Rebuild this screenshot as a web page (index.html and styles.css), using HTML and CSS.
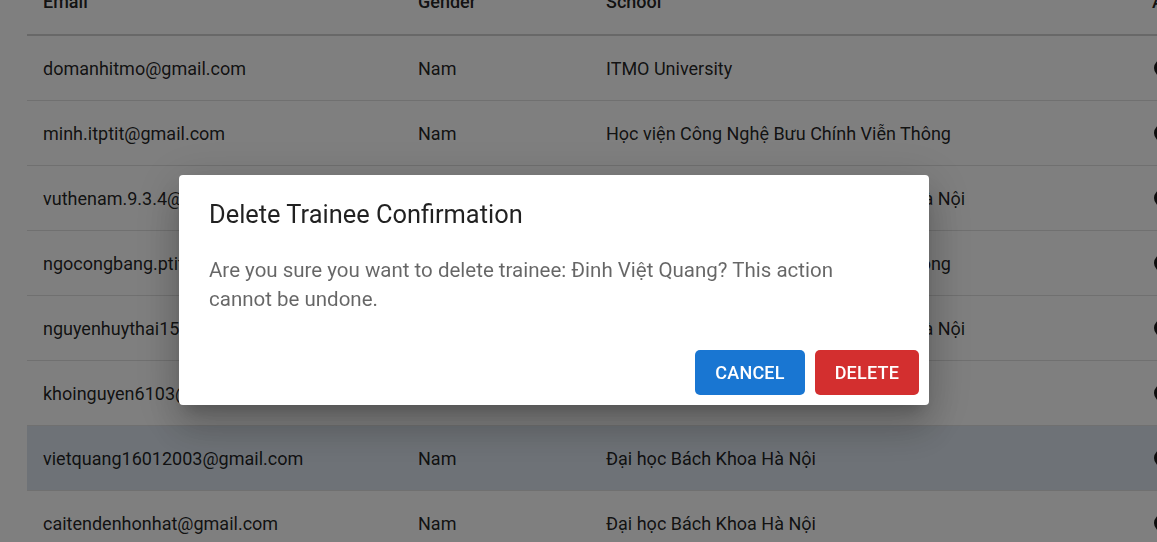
FILE: index.html
```html
<!DOCTYPE html>
<html lang="vi">
<head>
<meta charset="utf-8">
<title>Trainees</title>
<link rel="stylesheet" href="styles.css">
</head>
<body>
<div class="page">
  <div class="table">
    <div class="row head">
      <div class="cell">Email</div>
      <div class="cell">Gender</div>
      <div class="cell">School</div>
      <div class="cell">Actions</div>
    </div>
    <div class="row">
      <div class="cell">domanhitmo@gmail.com</div>
      <div class="cell">Nam</div>
      <div class="cell">ITMO University</div>
      <div class="cell"><span class="act"></span></div>
    </div>
    <div class="row">
      <div class="cell">minh.itptit@gmail.com</div>
      <div class="cell">Nam</div>
      <div class="cell">Học viện Công Nghệ Bưu Chính Viễn Thông</div>
      <div class="cell"><span class="act"></span></div>
    </div>
    <div class="row">
      <div class="cell">vuthenam.9.3.4@gmail.com</div>
      <div class="cell">Nam</div>
      <div class="cell">Đại học Công nghệ - Đại học Quốc gia Hà Nội</div>
      <div class="cell"><span class="act"></span></div>
    </div>
    <div class="row">
      <div class="cell">ngocongbang.ptit@gmail.com</div>
      <div class="cell">Nam</div>
      <div class="cell">Học viện Công Nghệ Bưu Chính Viễn Thông</div>
      <div class="cell"><span class="act"></span></div>
    </div>
    <div class="row">
      <div class="cell">nguyenhuythai15@gmail.com</div>
      <div class="cell">Nam</div>
      <div class="cell">Đại học Công nghệ - Đại học Quốc gia Hà Nội</div>
      <div class="cell"><span class="act"></span></div>
    </div>
    <div class="row">
      <div class="cell">khoinguyen6103@gmail.com</div>
      <div class="cell">Nam</div>
      <div class="cell">Đại học Bách Khoa Hà Nội</div>
      <div class="cell"><span class="act"></span></div>
    </div>
    <div class="row selected">
      <div class="cell">vietquang16012003@gmail.com</div>
      <div class="cell">Nam</div>
      <div class="cell">Đại học Bách Khoa Hà Nội</div>
      <div class="cell"><span class="act"></span></div>
    </div>
    <div class="row">
      <div class="cell">caitendenhonhat@gmail.com</div>
      <div class="cell">Nam</div>
      <div class="cell">Đại học Bách Khoa Hà Nội</div>
      <div class="cell"><span class="act"></span></div>
    </div>
  </div>
</div>

<div class="backdrop">
  <div class="dialog" role="dialog">
    <h2 class="dialog-title">Delete Trainee Confirmation</h2>
    <p class="dialog-text">Are you sure you want to delete trainee: Đinh Việt Quang? This action cannot be undone.</p>
    <div class="dialog-actions">
      <button class="btn btn-cancel">Cancel</button>
      <button class="btn btn-delete">Delete</button>
    </div>
  </div>
</div>
</body>
</html>
```

FILE: styles.css
```css
html, body {
  margin: 0;
  padding: 0;
  background: #ffffff;
  overflow: hidden;
  width: 1157px;
  height: 542px;
}

body {
  font-family: Roboto, "Noto Sans", "Liberation Sans", sans-serif;
  color: rgba(0, 0, 0, 0.87);
}

.page {
  padding-left: 27px;
  overflow: hidden;
}

.table {
  margin-top: -28px;
  width: 1300px;
}

.row {
  display: grid;
  grid-template-columns: 375px 188px 546px 1fr;
  height: 65px;
  box-sizing: border-box;
  border-bottom: 1px solid #e0e0e0;
  background: #ffffff;
}

.row.head {
  height: 64px;
  border-bottom: 2px solid #d0d0d0;
  font-weight: 500;
}

.row.head .cell {
  padding-bottom: 4px;
}

.row.selected {
  background: #dde5ee;
}

.cell {
  display: flex;
  align-items: center;
  padding: 0 16px;
  font-size: 18px;
  white-space: nowrap;
}

.act {
  display: inline-block;
  width: 18px;
  height: 18px;
  border-radius: 50%;
  background: #1a1a1a;
  margin-left: 2px;
}

.backdrop {
  position: fixed;
  inset: 0;
  background: rgba(0, 0, 0, 0.5);
  display: flex;
  align-items: flex-start;
  padding: 175px 0 0 179px;
  box-sizing: border-box;
}

.dialog {
  width: 750px;
  height: 230px;
  box-sizing: border-box;
  background: #ffffff;
  border-radius: 4px;
  box-shadow: 0px 11px 15px -7px rgba(0, 0, 0, 0.2),
              0px 24px 38px 3px rgba(0, 0, 0, 0.14),
              0px 9px 46px 8px rgba(0, 0, 0, 0.12);
  display: flex;
  flex-direction: column;
}

.dialog-title {
  margin: 0;
  padding: 22px 30px 0;
  font-size: 25.4px;
  font-weight: 400;
  line-height: 35px;
  color: rgba(0, 0, 0, 0.87);
}

.dialog-text {
  margin: 24px 0 0;
  padding: 0 30px;
  max-width: 650px;
  font-size: 20.5px;
  line-height: 29px;
  color: rgba(0, 0, 0, 0.6);
}

.dialog-actions {
  margin-top: auto;
  display: flex;
  justify-content: flex-end;
  gap: 10px;
  padding: 0 10px 10px;
}

.btn {
  height: 45px;
  border: none;
  border-radius: 5px;
  padding: 0 20px;
  font-family: Roboto, "Noto Sans", "Liberation Sans", sans-serif;
  font-size: 18px;
  font-weight: 500;
  text-transform: uppercase;
  letter-spacing: 0.2px;
  color: #ffffff;
  cursor: pointer;
}

.btn-cancel {
  background: #1976d2;
}

.btn-delete {
  background: #d32f2f;
}
```
